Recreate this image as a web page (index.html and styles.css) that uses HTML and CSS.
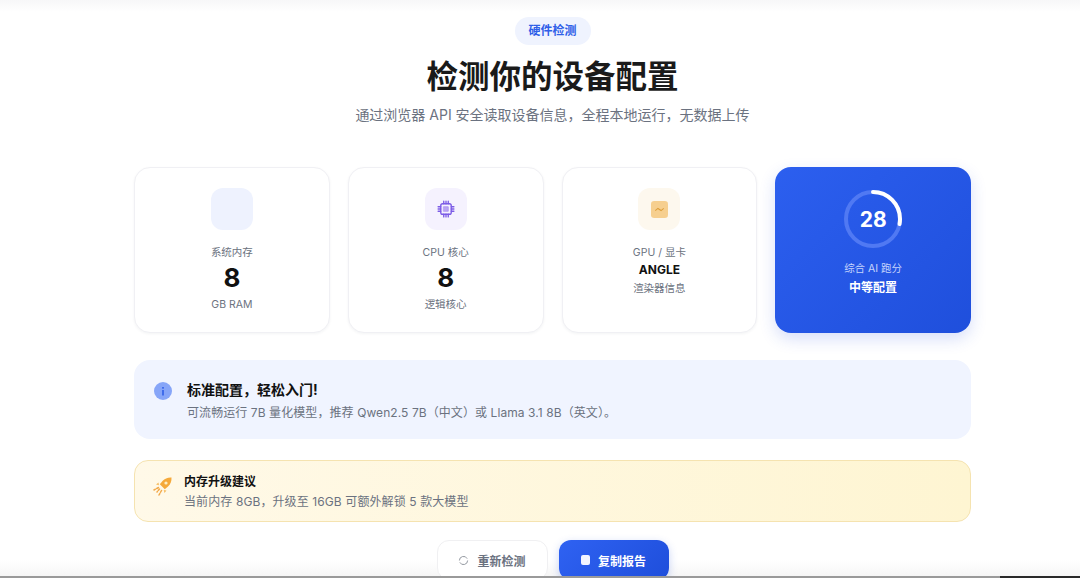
FILE: index.html
```html
<!DOCTYPE html>
<html lang="zh-CN">
<head>
<meta charset="utf-8">
<title>硬件检测</title>
<link rel="stylesheet" href="styles.css">
</head>
<body>
<main class="page">
  <header class="head">
    <span class="pill">硬件检测</span>
    <h1 class="title">检测你的设备配置</h1>
    <p class="subtitle">通过浏览器 API 安全读取设备信息&#xFF0C;全程本地运行&#xFF0C;无数据上传</p>
  </header>

  <section class="cards">
    <article class="card">
      <div class="tile tile-blue"></div>
      <div class="label">系统内存</div>
      <div class="value">8</div>
      <div class="label">GB RAM</div>
    </article>
    <article class="card">
      <div class="tile tile-purple">
        <svg class="cpu" viewBox="0 0 24 24" fill="none" stroke="#7c5ce6" stroke-width="1.8" stroke-linecap="round" stroke-linejoin="round">
          <rect x="5" y="5" width="14" height="14" rx="2.5"/>
          <rect x="9" y="9" width="6" height="6" fill="#b9a5f2" stroke="#a58df0" stroke-width="1"/>
          <path d="M9 1.500V5M12 1.500V5M15 1.500V5M9 19v3.500M12 19v3.500M15 19v3.500M1.500 9H5M1.500 12H5M1.500 15H5M19 9h3.500M19 12h3.500M19 15h3.500"/>
        </svg>
      </div>
      <div class="label">CPU 核心</div>
      <div class="value">8</div>
      <div class="label">逻辑核心</div>
    </article>
    <article class="card">
      <div class="tile tile-amber">
        <svg class="gpu" viewBox="0 0 16 16">
          <rect width="16" height="16" rx="3" fill="#f6cf8f"/>
          <path d="M4 9 L6.500 7 L9.500 9 L12 7" fill="none" stroke="#dd9f3c" stroke-width="1"/>
        </svg>
      </div>
      <div class="label">GPU / 显卡</div>
      <div class="value-text">ANGLE</div>
      <div class="label">渲染器信息</div>
    </article>
    <article class="card card-score">
      <div class="ring">
        <svg viewBox="0 0 58 58">
          <circle cx="29" cy="29" r="27" fill="none" stroke="#5079f3" stroke-width="4"/>
          <circle cx="29" cy="29" r="27" fill="none" stroke="#fff" stroke-width="4" stroke-linecap="round" stroke-dasharray="47.500 200" transform="rotate(-90 29 29)"/>
        </svg>
        <span class="ring-num">28</span>
      </div>
      <div class="label score-label">综合 AI 跑分</div>
      <div class="score-level">中等配置</div>
    </article>
  </section>

  <section class="info">
    <svg class="info-icon" viewBox="0 0 18 18">
      <circle cx="9" cy="9" r="9" fill="#86a5f8"/>
      <rect x="8.200" y="8" width="1.600" height="5.500" fill="#2f5fe8"/>
      <rect x="8.200" y="5" width="1.600" height="1.700" fill="#2f5fe8"/>
    </svg>
    <div class="info-body">
      <div class="info-title">标准配置&#xFF0C;轻松入门!</div>
      <div class="info-desc">可流畅运行 7B 量化模型&#xFF0C;推荐 Qwen2.5 7B&#xFF08;中文&#xFF09;或 Llama 3.1 8B&#xFF08;英文&#xFF09;&#x3002;</div>
    </div>
  </section>

  <section class="upgrade">
    <svg class="rocket" viewBox="0 0 20 20">
      <path d="M18.500 1.500c-3.800-.2-6.800 1-9 3.500L6.800 8.200l5 5 3.200-2.700c2.500-2.200 3.700-5.200 3.500-9z" fill="#f5a93a"/>
      <circle cx="13" cy="7" r="1.600" fill="#fdeec4"/>
      <path d="M5.500 6.500 3 8.500l3 .8zM13.500 14.500l-2 2.500-.8-3z" fill="#f7bd62"/>
      <path d="M5.500 11.500 1 14M8.500 14.500 6 19M6.500 13 4 16" fill="none" stroke="#f2a94a" stroke-width="1.500" stroke-linecap="round" stroke-dasharray="2 1.500"/>
    </svg>
    <div>
      <div class="upgrade-title">内存升级建议</div>
      <div class="upgrade-desc">当前内存 8GB&#xFF0C;升级至 16GB 可额外解锁 5 款大模型</div>
    </div>
  </section>

  <div class="actions">
    <button class="btn btn-ghost" type="button">
      <svg class="btn-icon" viewBox="0 0 12 12" fill="none" stroke="#8a8f98" stroke-width="1">
        <path d="M10.500 6A4.500 4.500 0 0 1 2 8M1.500 6A4.500 4.500 0 0 1 10 4"/>
      </svg>
      重新检测
    </button>
    <button class="btn btn-primary" type="button">
      <span class="copy-icon"></span>
      复制报告
    </button>
  </div>
</main>
<div class="edge"></div>
</body>
</html>
```

FILE: styles.css
```css
* { box-sizing: border-box; }

html, body {
  margin: 0;
  height: 578px;
  overflow: hidden;
}

body {
  position: relative;
  background: linear-gradient(#f7f7f8 0, #fff 12px, #fff 560px, #f6f6f6 576px);
  font-family: Inter, "Noto Sans CJK SC", sans-serif;
  color: #111;
}

.page {
  width: 837px;
  margin-left: 134px;
  padding-top: 17px;
}

.head {
  display: flex;
  flex-direction: column;
  align-items: center;
}

.pill {
  width: 76px;
  height: 28px;
  border-radius: 14px;
  background: #eff3fe;
  color: #2f5fe8;
  font-size: 12px;
  font-weight: 600;
  line-height: 28px;
  text-align: center;
}

.title {
  margin: 12px 0 0;
  font-size: 31.500px;
  font-weight: 700;
  line-height: 40px;
  color: #1a1a1a;
}

.subtitle {
  margin: 8px 0 0;
  font-size: 14px;
  line-height: 20px;
  color: #6b7280;
}

.cards {
  display: grid;
  grid-template-columns: repeat(4, 1fr);
  gap: 18px;
  margin-top: 42px;
}

.card {
  height: 166px;
  padding-top: 20px;
  display: flex;
  flex-direction: column;
  align-items: center;
  background: #fff;
  border: 1px solid #f0f0f4;
  border-radius: 16px;
  box-shadow: 0 1px 3px rgba(20, 30, 60, .05);
}

.tile {
  width: 42px;
  height: 42px;
  margin-bottom: 14px;
  border-radius: 12px;
  display: flex;
  align-items: center;
  justify-content: center;
}

.tile-blue { background: #eef2fe; }
.tile-purple { background: #f5f2fe; }
.tile-amber { background: #fdf8ee; }

.cpu { width: 18px; height: 18px; }
.gpu { width: 17px; height: 17px; }

.label {
  font-size: 10.500px;
  line-height: 18px;
  color: #6b7280;
}

.value {
  margin: -1px 0 1px;
  font-size: 26px;
  font-weight: 700;
  line-height: 34px;
  color: #111;
}

.value-text {
  margin: -1px 0 1px;
  font-size: 12px;
  font-weight: 700;
  line-height: 18px;
  color: #111;
}

.card-score {
  padding-top: 23px;
  border: 0;
  background: linear-gradient(135deg, #2c5fef, #1f4fdc);
  box-shadow: 0 6px 16px rgba(37, 80, 220, .18);
}

.ring {
  position: relative;
  width: 58px;
  height: 58px;
  margin-bottom: 12px;
}

.ring svg { display: block; width: 58px; height: 58px; }

.ring-num {
  position: absolute;
  inset: 0;
  display: flex;
  align-items: center;
  justify-content: center;
  font-size: 21px;
  font-weight: 700;
  color: #fff;
}

.score-label { color: #c5d4fc; }

.score-level {
  font-size: 12px;
  font-weight: 700;
  line-height: 20px;
  color: #fff;
}

.info {
  display: flex;
  align-items: center;
  gap: 15px;
  height: 79px;
  margin-top: 27px;
  padding: 4px 0 0 20px;
  background: #f0f4ff;
  border-radius: 16px;
}

.info-icon { width: 18px; height: 18px; flex: none; margin-top: -21px; }

.info-title {
  font-size: 14px;
  font-weight: 700;
  line-height: 20px;
  color: #111;
}

.info-desc {
  margin-top: 3px;
  font-size: 12px;
  letter-spacing: .08px;
  line-height: 20px;
  color: #6b7280;
}

.upgrade {
  display: flex;
  align-items: center;
  gap: 11px;
  height: 62px;
  margin-top: 21px;
  padding: 2px 0 0 18px;
  background: linear-gradient(90deg, #fff9e8, #fef5d2);
  border: 1px solid #f5e3b0;
  border-radius: 14px;
}

.rocket { width: 20px; height: 20px; flex: none; margin-top: -12px; }

.upgrade-title {
  font-size: 12px;
  font-weight: 600;
  line-height: 18px;
  color: #111;
}

.upgrade-desc {
  margin-top: 1px;
  font-size: 12px;
  letter-spacing: .1px;
  line-height: 20px;
  color: #6b7280;
}

.actions {
  display: flex;
  justify-content: center;
  gap: 11px;
  margin-top: 18px;
}

.btn {
  display: flex;
  align-items: center;
  justify-content: center;
  gap: 8px;
  height: 40px;
  border-radius: 12px;
  font-family: inherit;
  font-size: 12px;
  font-weight: 600;
}

.btn-ghost {
  width: 111px;
  background: #fff;
  border: 1px solid #f0f0f2;
  color: #6b7280;
}

.btn-primary {
  width: 110px;
  border: 0;
  background: linear-gradient(135deg, #2f62f2, #1e4edb);
  color: #fff;
  box-shadow: 0 3px 8px rgba(37, 80, 220, .25);
}

.btn-icon { width: 11px; height: 11px; }

.copy-icon {
  width: 9px;
  height: 10px;
  border-radius: 2px;
  background: #f2f5ff;
}

.edge {
  position: absolute;
  left: 0;
  right: 0;
  bottom: 0;
  height: 2px;
  background: linear-gradient(90deg, #9a9a9a 1000px, #2a2a2a 1000px);
}
```
